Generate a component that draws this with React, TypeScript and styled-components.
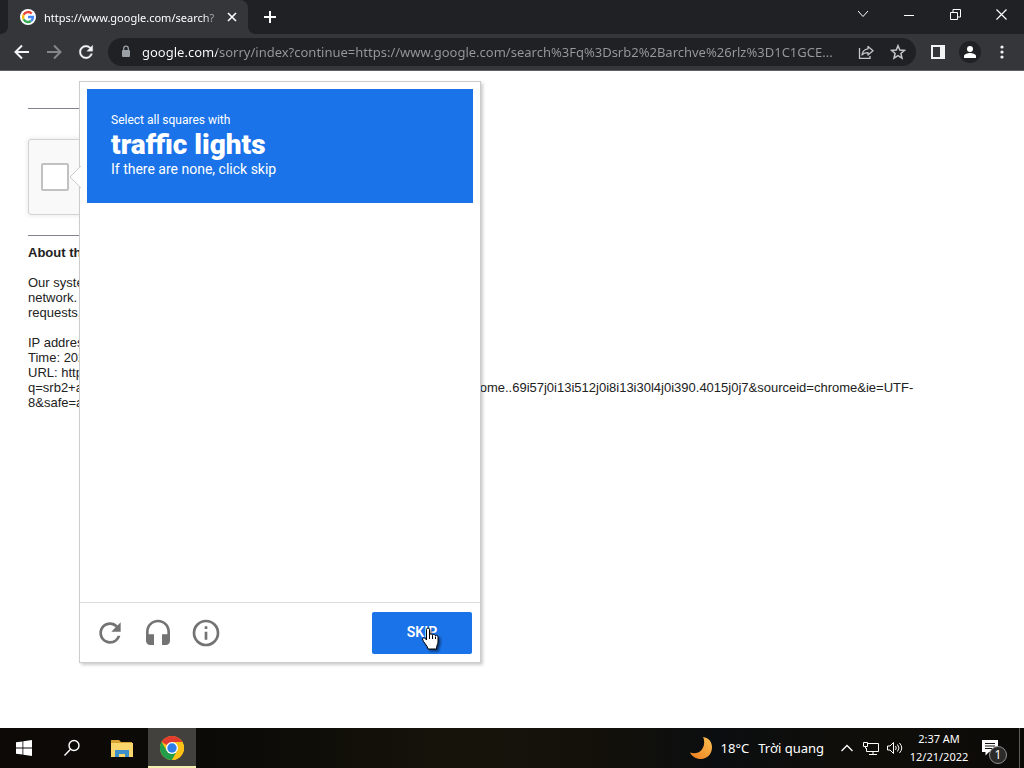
import React from "react";
import styled, { createGlobalStyle } from "styled-components";

const Global = createGlobalStyle`
  * { box-sizing: border-box; }
  html, body { margin: 0; background: #fff; }
  button { font: inherit; color: inherit; background: none; border: 0; padding: 0; margin: 0; cursor: pointer; }
  svg { display: block; flex: none; }
`;

const ui = `"Noto Sans", "Open Sans", sans-serif`;

const Screen = styled.div`
  display: flex;
  flex-direction: column;
  min-height: 100vh;
  overflow: hidden;
  font-family: ${ui};
`;

/* browser frame */
const TabStrip = styled.header`
  display: flex;
  align-items: center;
  height: 34px;
  padding-left: 8px;
  background: #202124;
  color: #fff;
`;
const Tab = styled.div`
  position: relative;
  display: flex;
  align-items: center;
  width: 240px;
  height: 34px;
  padding: 0 8px 0 12px;
  background: #35363a;
  border-radius: 0 8px 0 0;
  font-size: 11px;
  &::before, &::after {
    content: "";
    position: absolute;
    bottom: 0;
    width: 8px;
    height: 8px;
  }
  &::before { left: -8px; background: radial-gradient(circle at 0 0, #202124 8px, #35363a 8px); }
  &::after { right: -8px; background: radial-gradient(circle at 100% 0, #202124 8px, #35363a 8px); }
`;
const TabTitle = styled.span`
  flex: 1;
  min-width: 0;
  margin-left: 8px;
  overflow: hidden;
  white-space: nowrap;
  mask-image: linear-gradient(90deg, #000 88%, transparent);
`;
const IconButton = styled.button<{ $w: number; $h?: number; $dim?: boolean }>`
  display: flex;
  align-items: center;
  justify-content: center;
  flex: none;
  width: ${(p) => p.$w}px;
  height: ${(p) => p.$h ?? 28}px;
  color: ${(p) => (p.$dim ? "#85868a" : "inherit")};
`;
const NewTab = styled(IconButton)`
  margin-left: 8px;
`;
const WindowControls = styled.div`
  display: flex;
  align-self: flex-start;
  margin-left: auto;
`;
const Toolbar = styled.nav`
  display: flex;
  align-items: center;
  height: 37px;
  padding: 0 6px;
  background: #35363a;
  border-bottom: 1px solid #606164;
  color: #f1f3f4;
`;
const Omnibox = styled.div`
  display: flex;
  align-items: center;
  flex: 1;
  min-width: 0;
  height: 28px;
  margin: 0 6px;
  padding: 0 2px 0 12px;
  border-radius: 14px;
  background: #202124;
  color: #c5c7ca;
`;
const Address = styled.input`
  flex: 1;
  min-width: 0;
  height: 24px;
  margin-left: 10px;
  padding: 0;
  border: 0;
  outline: 0;
  font: 13px/24px ${ui};
  color: #9aa0a6;
  text-overflow: ellipsis;
  background: linear-gradient(90deg, #fff 75px, #96999d 75px);
  background-clip: text;
  -webkit-text-fill-color: transparent;
`;
const Avatar = styled.span`
  display: flex;
  align-items: center;
  justify-content: center;
  width: 22px;
  height: 22px;
  border-radius: 50%;
  background: #202124;
`;

/* page */
const Page = styled.main`
  position: relative;
  flex: 1;
  padding: 37px 28px 20px;
  background: #fff;
  color: #222;
  font: 13px/15px "Liberation Sans", Arial, sans-serif;
`;
const Column = styled.div`
  max-width: 400px;
`;
const Rule = styled.hr`
  height: 1px;
  margin: 0;
  border: 0;
  background: #85818f;
`;
const Captcha = styled.label`
  display: flex;
  align-items: center;
  width: 304px;
  height: 76px;
  margin: 30px 0 20px;
  padding-left: 12px;
  border: 1px solid #d3d3d3;
  border-radius: 3px;
  background: #f9f9f9;
  box-shadow: 0 0 4px 1px rgba(0, 0, 0, 0.08);
`;
const Check = styled.input`
  appearance: none;
  width: 28px;
  height: 28px;
  margin: 0;
  border: 2px solid #c1c1c1;
  border-radius: 2px;
  background: #fff;
`;
const Heading = styled.h1`
  margin: 9px 0 15px;
  font-size: 13px;
  line-height: 15px;
`;
const Para = styled.p`
  margin: 0 0 15px;
`;

/* challenge popup */
const Challenge = styled.section`
  position: absolute;
  top: 10px;
  left: 79px;
  display: flex;
  flex-direction: column;
  width: 402px;
  height: 582px;
  border: 1px solid #ccc;
  background: #fff;
  box-shadow: 2px 2px 3px rgba(0, 0, 0, 0.2);
  font-family: Roboto, sans-serif;
`;
const Pointer = styled.svg`
  position: absolute;
  top: 84px;
  left: -11px;
`;
const Prompt = styled.div`
  margin: 7px;
  height: 114px;
  padding: 23px 24px;
  background: #1a73e8;
  color: #fff;
`;
const Small = styled.div<{ $size: number }>`
  font-size: ${(p) => p.$size}px;
  line-height: 16px;
`;
const Target = styled.strong`
  display: block;
  font-size: 28px;
  line-height: 33px;
  font-weight: 900;
`;
const Actions = styled.footer`
  display: flex;
  align-items: center;
  height: 60px;
  margin-top: auto;
  padding: 0 8px 0 6px;
  border-top: 1px solid #dcdcdc;
  color: #737373;
`;
const Skip = styled.button`
  position: relative;
  width: 100px;
  height: 42px;
  margin-left: auto;
  border-radius: 2px;
  background: #1a73e8;
  color: #fff;
  font-size: 14px;
  font-weight: 600;
`;
const Cursor = styled.svg`
  position: absolute;
  left: 49px;
  top: 15px;
  filter: drop-shadow(2px 2px 1px rgba(0, 0, 0, 0.5));
`;

/* desktop task bar */
const Taskbar = styled.footer`
  display: flex;
  align-items: center;
  height: 40px;
  background: linear-gradient(90deg, #0c0907, #0c0b07 25%, #16140a 45%, #12100a 60%, #0b0e10 70%, #100e09 85%, #0c0a07);
  color: #fff;
  font-size: 12px;
  line-height: 18px;
`;
const TaskButton = styled.button<{ $app?: boolean; $active?: boolean }>`
  display: flex;
  align-items: center;
  justify-content: center;
  width: 48px;
  height: 40px;
  margin-left: ${(p) => (p.$app ? 2 : 0)}px;
  background: ${(p) => (p.$active ? "#42413d" : "none")};
  box-shadow: ${(p) => (p.$active ? "inset 0 -2px #f3efb0" : "none")};
`;
const Tray = styled.div`
  display: flex;
  align-items: center;
  height: 40px;
  margin-left: auto;
`;
const Weather = styled.button`
  display: flex;
  align-items: center;
  gap: 9px;
  margin-right: 11px;
  font-size: 13px;
`;
const Clock = styled.time`
  width: 64px;
  text-align: center;
  font-size: 11px;
  white-space: nowrap;
`;
const Notice = styled.button`
  position: relative;
  display: flex;
  margin-left: 11px;
  padding-right: 21px;
`;
const Badge = styled.span`
  position: absolute;
  left: 7px;
  top: 6px;
  width: 18px;
  height: 18px;
  border: 1px solid #8e8e8c;
  border-radius: 50%;
  background: #2c2b29;
  font-size: 12px;
  line-height: 16px;
  text-align: center;
`;
const ShowDesktop = styled.button`
  width: 5px;
  height: 40px;
  border-left: 1px solid #5d5c58;
`;

const Google = () => (
  <svg width="16" height="16" viewBox="0 0 16 16">
    <circle cx="8" cy="8" r="8" fill="#fff" />
    <g fill="none" strokeWidth="2.3">
      <path d="M11.7 4.6A5 5 0 0 0 3.6 5.7" stroke="#ea4335" />
      <path d="M3.6 5.7a5 5 0 0 0 0 4.6" stroke="#fbbc05" />
      <path d="M3.6 10.3a5 5 0 0 0 7.4 1.7" stroke="#34a853" />
      <path d="M11 12a5 5 0 0 0 2-4H8" stroke="#4285f4" />
    </g>
  </svg>
);
const line = { fill: "none", stroke: "currentColor" };
const RELOAD =
  "M17.65 6.35A7.958 7.958 0 0 0 12 4c-4.42 0-7.99 3.58-7.99 8s3.57 8 7.99 8c3.73 0 6.84-2.55 7.73-6h-2.08A5.99 5.99 0 0 1 12 18c-3.31 0-6-2.69-6-6s2.69-6 6-6c1.66 0 3.14.69 4.22 1.78L13 11h7V4l-2.35 2.35z";

export default function App() {
  return (
    <Screen>
      <Global />
      <TabStrip>
        <Tab>
          <Google />
          <TabTitle>https://www.google.com/search?</TabTitle>
          <IconButton $w={16} aria-label="Close tab">
            <svg width="10" height="10" {...line} strokeWidth="1.6"><path d="M1 1l8 8M9 1L1 9" /></svg>
          </IconButton>
        </Tab>
        <NewTab $w={28} aria-label="New tab">
          <svg width="14" height="14" {...line} strokeWidth="2"><path d="M7 1v12M1 7h12" /></svg>
        </NewTab>
        <WindowControls>
          <IconButton $w={46} aria-label="Search tabs">
            <svg width="12" height="12" {...line}><path d="M1 3l5 5.500L11 3" /></svg>
          </IconButton>
          <IconButton $w={46} aria-label="Minimize">
            <svg width="11" height="11" {...line}><path d="M0 6.500h10" /></svg>
          </IconButton>
          <IconButton $w={46} aria-label="Restore">
            <svg width="11" height="11" {...line}><path d="M.5 3.500h7v7h-7zM3 3V.5h7.500v7.500H8" /></svg>
          </IconButton>
          <IconButton $w={46} aria-label="Close">
            <svg width="11" height="11" {...line} strokeWidth="1.2"><path d="M.5.5l10 10M10.500.500l-10 10" /></svg>
          </IconButton>
        </WindowControls>
      </TabStrip>
      <Toolbar>
        <IconButton $w={32} aria-label="Back">
          <svg width="16" height="16" {...line} strokeWidth="2"><path d="M15 8H2M8 1.500L1.500 8 8 14.500" /></svg>
        </IconButton>
        <IconButton $w={32} $dim aria-label="Forward">
          <svg width="16" height="16" {...line} strokeWidth="2"><path d="M1 8h13M8 1.500L14.500 8 8 14.500" /></svg>
        </IconButton>
        <IconButton $w={32} aria-label="Reload">
          <svg width="20" height="20" viewBox="0 0 24 24" fill="currentColor" stroke="currentColor" strokeWidth=".4"><path d={RELOAD} /></svg>
        </IconButton>
        <Omnibox>
          <svg width="12" height="14" viewBox="0 0 12 14" fill="#9aa0a6">
            <rect x="2" y="5" width="8" height="7" rx="1" />
            <path d="M3.700 6V3.500a2.300 2.300 0 0 1 4.600 0V6" fill="none" stroke="#9aa0a6" strokeWidth="1.300" />
          </svg>
          <Address
            readOnly
            aria-label="Address"
            value="google.com/sorry/index?continue=https://www.google.com/search%3Fq%3Dsrb2%2Barchve%26rlz%3D1C1GCE..."
          />
          <IconButton $w={32} aria-label="Share">
            <svg width="16" height="16" {...line} strokeWidth="1.300">
              <path d="M1.500 4v10.300h10.500V12" />
              <path d="M10 2.500l5 4.300-5 4.200V8.600C7 8.600 5.200 9.300 4 11c.3-3.300 2.500-5.700 6-6.200z" strokeLinejoin="round" />
            </svg>
          </IconButton>
          <IconButton $w={32} aria-label="Bookmark">
            <svg width="16" height="16" viewBox="0 0 16 16" {...line} strokeWidth="1.500">
              <path d="M8 1.700l1.800 4.300 4.700.4-3.600 3.100 1.100 4.600L8 11.700l-4 2.400 1.100-4.600L1.500 6.400l4.700-.4z" />
            </svg>
          </IconButton>
        </Omnibox>
        <IconButton $w={32} aria-label="Side panel">
          <svg width="14" height="14"><path fillRule="evenodd" d="M0 0h14v14H0zM2 2v10h7V2z" fill="currentColor" /></svg>
        </IconButton>
        <IconButton $w={32} aria-label="Profile">
          <Avatar>
            <svg width="12" height="12" fill="#fff"><circle cx="6" cy="3" r="3" /><path d="M0 12v-2c0-2 4-3 6-3s6 1 6 3v2z" /></svg>
          </Avatar>
        </IconButton>
        <IconButton $w={32} aria-label="Menu">
          <svg width="4" height="14" fill="currentColor"><circle cx="2" cy="2" r="1.600" /><circle cx="2" cy="7" r="1.600" /><circle cx="2" cy="12" r="1.600" /></svg>
        </IconButton>
      </Toolbar>

      <Page>
        <Column>
          <Rule />
          <Captcha><Check type="checkbox" aria-label="Verify" /></Captcha>
          <Rule />
          <Heading>About this page</Heading>
          <Para>
            Our systems have detected unusual traffic from your computer network. This page checks to see if it's
            really you sending the requests, and not a robot.
          </Para>
          <Para>
            IP address: 10.0.0.1<br />
            Time: 2022-12-21T10:37:00Z<br />
            URL: https://www.google.com/search?q=srb2+archve&amp;rlz=1C1GCEU_enVN1033VN1033&amp;oq=srb2+archve&amp;aqs=chrome..69i57j0i13i512j0i8i13i30l4j0i390.4015j0j7&amp;sourceid=chrome&amp;ie=UTF-8&amp;safe=active
          </Para>
        </Column>

        <Challenge>
          <Pointer width="12" height="22" viewBox="0 0 12 22">
            <path d="M12 0L1 11l11 11" fill="#fff" stroke="#ccc" />
          </Pointer>
          <Prompt>
            <Small $size={12}>Select all squares with</Small>
            <Target>traffic lights</Target>
            <Small $size={14}>If there are none, click skip</Small>
          </Prompt>
          <Actions>
            <IconButton $w={48} $h={48} aria-label="New challenge">
              <svg width="32" height="32" viewBox="0 0 24 24" fill="currentColor"><path d={RELOAD} /></svg>
            </IconButton>
            <IconButton $w={48} $h={48} aria-label="Audio challenge">
              <svg width="32" height="32" viewBox="0 0 24 24" fill="currentColor">
                <path d="M12 2a9 9 0 0 0-9 9v7c0 1.660 1.340 3 3 3h3v-8H5v-2c0-3.870 3.130-7 7-7s7 3.130 7 7v2h-4v8h3c1.660 0 3-1.340 3-3v-7a9 9 0 0 0-9-9z" />
              </svg>
            </IconButton>
            <IconButton $w={48} $h={48} aria-label="Help">
              <svg width="32" height="32" viewBox="0 0 24 24" fill="currentColor">
                <path d="M11 17h2v-6h-2v6zm1-15a10 10 0 1 0 0 20 10 10 0 0 0 0-20zm0 18a8 8 0 1 1 0-16 8 8 0 0 1 0 16zM11 9h2V7h-2v2z" />
              </svg>
            </IconButton>
            <Skip>
              SKIP
              <Cursor width="18" height="23" viewBox="0 0 18 23">
                <path
                  d="M5.500 13V2.500a1.500 1.500 0 0 1 3 0V8c0-1.500 3-1.300 3 .5 0-1.500 3-1.300 3 .5 0-1.300 2.500-1 2.500 1v5c0 2-1.500 3-1.500 7H7c0-3-5.500-7.500-5.500-10C1.500 10.300 4.500 10.500 5.500 13z"
                  fill="#fff" stroke="#000"
                />
                <path d="M8.500 7.500V12M11.500 8.500V12M14.500 9.500V12" stroke="#000" />
              </Cursor>
            </Skip>
          </Actions>
        </Challenge>
      </Page>

      <Taskbar>
        <TaskButton aria-label="Start">
          <svg width="16" height="16" fill="#fff"><path d="M0 2.300L6.500 1.400v6.200H0zM7.300 1.300L16 0v7.600H7.300zM0 8.400h6.500v6.200L0 13.700zM7.300 8.400H16V16l-8.700-1.300z" /></svg>
        </TaskButton>
        <TaskButton aria-label="Search">
          <svg width="18" height="18" {...line} strokeWidth="1.400"><circle cx="11" cy="6.500" r="5" /><path d="M7.500 10.200L1.500 16.500" /></svg>
        </TaskButton>
        <TaskButton $app aria-label="File Explorer">
          <svg width="22" height="18">
            <path d="M0 1h8l2 2h11v3H0z" fill="#d9a334" />
            <path d="M0 4h22v14H0z" fill="#f9d66b" />
            <path d="M4 18v-7h14v7h-4v-3H8v3z" fill="#3d8fcb" />
          </svg>
        </TaskButton>
        <TaskButton $app $active aria-label="Chrome">
          <svg width="24" height="24" viewBox="0 0 24 24">
            <circle cx="12" cy="12" r="12" fill="#fbc116" />
            <path d="M12 12L1.600 6A12 12 0 0 1 22.400 6H12z" fill="#e33b2e" />
            <path d="M1.600 6A12 12 0 0 0 12 24l5.200-9L12 12l-5.200 3z" fill="#229e4b" />
            <path d="M12 6h10.400a12 12 0 0 1-10.400 18l5.200-9z" fill="#fbc116" />
            <circle cx="12" cy="12" r="6" fill="#fff" />
            <circle cx="12" cy="12" r="4.700" fill="#2f7de9" />
          </svg>
        </TaskButton>
        <Tray>
          <Weather>
            <svg width="22" height="22">
              <defs><linearGradient id="moon" x1="0" y1="1" x2="1" y2="0"><stop stopColor="#ee7d1e" /><stop offset="1" stopColor="#fbc050" /></linearGradient></defs>
              <path d="M13 0C19 1 22 5 22 10.500 22 17 17 22 11 22 6 22 2 19.500 0 15.500 4 17 8.500 16.500 11.500 13 14.500 9.500 15 4 13 0z" fill="url(#moon)" />
            </svg>
            <span>18°C</span>
            <span>Trời quang</span>
          </Weather>
          <IconButton $w={24} aria-label="Hidden icons">
            <svg width="12" height="8" {...line} strokeWidth="1.300"><path d="M.5 7L6 1.500 11.500 7" /></svg>
          </IconButton>
          <IconButton $w={24} aria-label="Network">
            <svg width="17" height="15" {...line}><path d="M5 2.500h10.500v8H3.500V7M10 10.500v3M6 13.500h8M.5 1.500h4v4h-4zM2.500 5.500v2" /></svg>
          </IconButton>
          <IconButton $w={24} aria-label="Volume">
            <svg width="17" height="14" {...line}><path d="M.5 5H3l3.500-3.500v11L3 9H.5zM8.500 5q1.500 2 0 4M10.500 3.500q3 3.500 0 7M12.500 2q4.500 5 0 10" /></svg>
          </IconButton>
          <Clock>2:37 AM<br />12/21/2022</Clock>
          <Notice aria-label="Notifications">
            <svg width="16" height="16"><path d="M0 0h16v12H7l-3.500 3.500V12H0z" fill="#fff" /><path d="M3 3.500h10M3 6h10M3 8.500h7" stroke="#16140f" /></svg>
            <Badge>1</Badge>
          </Notice>
          <ShowDesktop aria-label="Show desktop" />
        </Tray>
      </Taskbar>
    </Screen>
  );
}
